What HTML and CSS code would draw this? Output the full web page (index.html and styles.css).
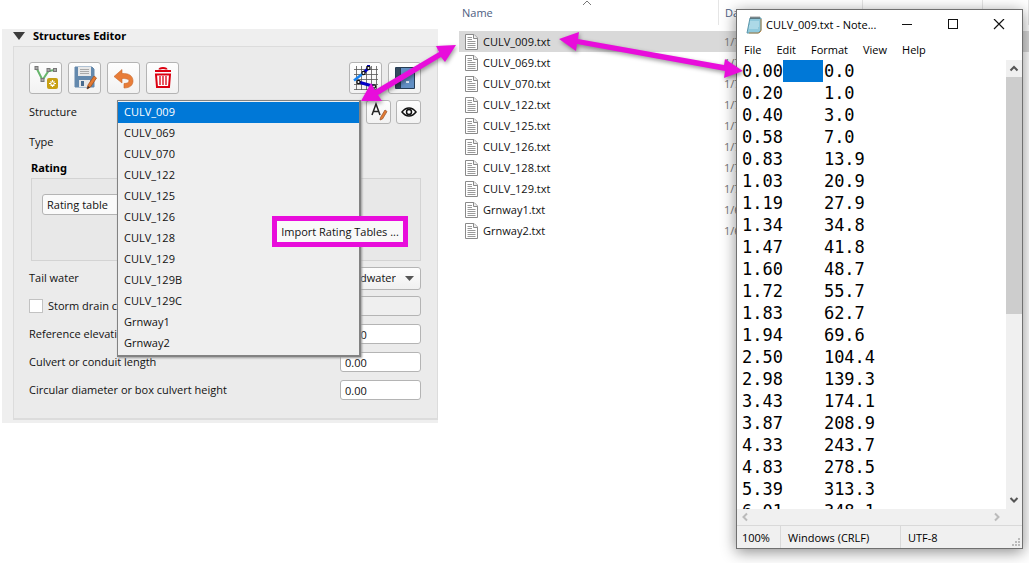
FILE: index.html
```html
<!DOCTYPE html>
<html lang="en">
<head>
<meta charset="utf-8">
<title>Import rating tables</title>
<link rel="stylesheet" href="styles.css">
</head>
<body>
<main class="stage">
  <section class="panel">
    <h2 class="panel-title"><svg width="12" height="8" viewBox="0 0 12 8"><path d="M0 0H12L6 8Z" fill="#3c3c3c"/></svg>Structures Editor</h2>
    <div class="group">
      <div class="toolbar">
        <button class="tool" aria-label="Add structure"><svg width="26" height="26" viewBox="0 0 26 26"><path d="M3.500 3L9.500 15L15.500 6L22 5" fill="none" stroke="#67b56c" stroke-width="2"/><g fill="#aaa" stroke="#777"><rect x="2" y="1.500" width="3" height="3"/><rect x="8" y="13.500" width="3" height="3"/><rect x="14" y="3.500" width="3" height="3"/><rect x="20.500" y="3.500" width="3" height="3"/></g><rect x="14" y="13" width="11" height="11" rx="2" fill="#c8a013"/><path d="M19.500 15V22M16 18.500H23M17.500 16.500L21.500 20.500M21.500 16.500L17.500 20.500" stroke="#fff" stroke-width="1.200"/><circle cx="19.500" cy="18.500" r="1.200" fill="#c8a013"/></svg></button>
        <button class="tool" aria-label="Save"><svg width="26" height="26" viewBox="0 0 26 26"><path d="M3 2H20L22 4V22H3Z" fill="#6489ad" stroke="#6489ad"/><rect x="6" y="2" width="13" height="9" fill="#e8e8e8"/><path d="M8 4.500H17M8 6.500H17M8 8.500H17" stroke="#aaa"/><rect x="7" y="15" width="11" height="7" fill="#e8e8e8"/><rect x="9" y="16" width="3" height="5" fill="#496b8e"/><path d="M22 11L24.500 13L18.500 22L15 24L16 20Z" fill="#e47b32" stroke="#a9521e" stroke-width=".8"/><path d="M15 24L16 21L18 22.500Z" fill="#333"/></svg></button>
        <button class="tool" aria-label="Undo"><svg width="26" height="26" viewBox="0 0 26 26"><path d="M3 11.500L11 4.500V8.500C18 8 22 11 22 16C22 20 19 23 13 23V18.500C16 18.500 18 17.500 18 16C18 14 15 13.500 11 13.500V18Z" fill="#e87d38" stroke="#c8662a" stroke-width=".6"/></svg></button>
        <button class="tool" aria-label="Delete"><svg width="26" height="26" viewBox="0 0 26 26"><path d="M9.500 4.500C9.500 2.500 16.500 2.500 16.500 4.500M5 6H21" fill="none" stroke="#dc0010" stroke-width="2"/><path d="M6 9.500H20L19 22H7Z" fill="#fff" stroke="#dc0010" stroke-width="2"/><path d="M10 11V20M13 11V20M16 11V20" stroke="#dc0010" stroke-width="1.300"/></svg></button>
        <span class="grow"></span>
        <button class="tool" aria-label="Schematize"><svg width="26" height="26" viewBox="0 0 26 26"><path d="M1 4.500H25M1 9.500H25M1 14.500H25M1 19.500H25M1 24.500H25M3.500 1V25M8.500 1V25M13.500 1V25M18.500 1V25M23.500 1V25" stroke="#555" stroke-width=".8"/><path d="M1 15.500L10.500 8" stroke="#1681f0" stroke-width="2.500"/><path d="M10.500 8L15.500 3V0M5.500 17L21 21.500" stroke="#0000c8" stroke-width="3" fill="none"/><g fill="#fff" stroke="#111" stroke-width="1.200"><circle cx="10.500" cy="8" r="1.600"/><circle cx="15.500" cy="3" r="1.600"/><circle cx="5.500" cy="17" r="1.600"/><circle cx="21" cy="21.500" r="1.600"/></g></svg></button>
        <button class="tool" aria-label="Help"><svg width="26" height="26" viewBox="0 0 26 26"><rect x="3" y="2" width="20" height="22" rx="1" fill="#263d55"/><rect x="4" y="3" width="4" height="20" fill="#34495e"/><rect x="9" y="3" width="13" height="20" fill="#628fc4"/><rect x="14" y="16" width="3" height="2" fill="#e5eefa"/></svg></button>
      </div>
      <div class="row row-structure">
        <label for="structure">Structure</label>
        <span class="grow"></span>
        <button class="mini" aria-label="Rename"><svg width="20" height="20" viewBox="0 0 20 20"><path d="M3 13L7 2L11 13M4.500 9.500H9.500" fill="none" stroke="#222" stroke-width="1.500"/><path d="M16 8L18 9.500L13.500 17L11 18L11.500 15.500Z" fill="#e47b32" stroke="#9c5b34" stroke-width=".8"/></svg></button>
        <button class="mini" aria-label="Show"><svg width="20" height="20" viewBox="0 0 20 20"><path d="M3 10C7 4.700 13 4.700 17 10C13 15.300 7 15.300 3 10Z" fill="#fff" stroke="#111" stroke-width="1.500"/><circle cx="10" cy="10" r="2.500" fill="#fff" stroke="#111" stroke-width="1.500"/></svg></button>
      </div>
      <div class="row row-type">Type</div>
      <h3 class="rating-title">Rating</h3>
      <div class="rating">
        <select class="rating-select" aria-label="Rating"><option>Rating table</option></select>
      </div>
      <div class="row"><label for="tail">Tail water</label><span class="grow"></span>
        <span class="combo"><select id="tail"><option>Headwater</option></select><svg width="9" height="5" viewBox="0 0 9 5"><path d="M0 0H9L4.500 5Z" fill="#555"/></svg></span></div>
      <div class="row"><label class="check"><input type="checkbox">Storm drain capacity</label><span class="grow"></span><input class="field off" aria-label="Storm drain capacity" disabled></div>
      <div class="row"><label for="ref">Reference elevation</label><span class="grow"></span><input class="field" id="ref" value="0.00"></div>
      <div class="row"><label for="len">Culvert or conduit length</label><span class="grow"></span><input class="field" id="len" value="0.00"></div>
      <div class="row"><label for="dia">Circular diameter or box culvert height</label><span class="grow"></span><input class="field" id="dia" value="0.00"></div>
    </div>
    <select class="popup" id="structure" size="12">
      <option selected>CULV_009</option><option>CULV_069</option><option>CULV_070</option><option>CULV_122</option><option>CULV_125</option><option>CULV_126</option><option>CULV_128</option><option>CULV_129</option><option>CULV_129B</option><option>CULV_129C</option><option>Grnway1</option><option>Grnway2</option>
    </select>
    <button class="import">Import Rating Tables ...</button>
  </section>

  <section class="files">
    <svg class="sort" width="10" height="6" viewBox="0 0 10 6"><path d="M1 5L5 1L9 5" fill="none" stroke="#777"/></svg>
    <svg class="defs" width="0" height="0"><symbol id="doc" viewBox="0 0 13 16"><path d="M.5.5H9L12.500 4V15.500H.5Z" fill="#fff" stroke="#8a8a8a"/><path d="M8.500.5V4.500H12.500" fill="#eee" stroke="#8a8a8a"/><path d="M2.500 3.500H7M2.500 5.500H7M2.500 7.500H10.500M2.500 9.500H10.500M2.500 11.500H10.500M2.500 13.500H10.500" stroke="#999"/></symbol></svg>
    <table class="list">
      <thead><tr><th class="c-name">Name</th><th class="c-date">Date modified</th><th class="c-type">Type</th><th>Size</th></tr></thead>
      <tbody>
        <tr class="picked"><td><svg class="doc"><use href="#doc"/></svg>CULV_009.txt</td><td>1/7</td><td></td><td></td></tr>
        <tr><td><svg class="doc"><use href="#doc"/></svg>CULV_069.txt</td><td>1/7</td><td></td><td></td></tr>
        <tr><td><svg class="doc"><use href="#doc"/></svg>CULV_070.txt</td><td>1/7</td><td></td><td></td></tr>
        <tr><td><svg class="doc"><use href="#doc"/></svg>CULV_122.txt</td><td>1/7</td><td></td><td></td></tr>
        <tr><td><svg class="doc"><use href="#doc"/></svg>CULV_125.txt</td><td>1/7</td><td></td><td></td></tr>
        <tr><td><svg class="doc"><use href="#doc"/></svg>CULV_126.txt</td><td>1/7</td><td></td><td></td></tr>
        <tr><td><svg class="doc"><use href="#doc"/></svg>CULV_128.txt</td><td>1/7</td><td></td><td></td></tr>
        <tr><td><svg class="doc"><use href="#doc"/></svg>CULV_129.txt</td><td>1/7</td><td></td><td></td></tr>
        <tr><td><svg class="doc"><use href="#doc"/></svg>Grnway1.txt</td><td>1/6</td><td></td><td></td></tr>
        <tr><td><svg class="doc"><use href="#doc"/></svg>Grnway2.txt</td><td>1/6</td><td></td><td></td></tr>
      </tbody>
    </table>
  </section>

  <section class="notepad">
    <header class="titlebar">
      <svg width="17" height="18" viewBox="0 0 17 18"><path d="M4 2H15V14L12 17H1Z" fill="#8fc9dc" stroke="#5d97aa"/><path d="M15 3V15L13 17H3" fill="none" stroke="#b98d52"/><path d="M4 6H13M4 8H13M3 10H13M3 12H12" stroke="#c9e9f2"/><path d="M5 .5V3M7 .5V3M9 .5V3M11 .5V3M13 .5V3" stroke="#444"/></svg>
      <h1>CULV_009.txt - Note...</h1>
      <button aria-label="Minimize"><svg width="12" height="12" viewBox="0 0 12 12"><path d="M1 5.500H11" stroke="#111"/></svg></button>
      <button aria-label="Maximize"><svg width="12" height="12" viewBox="0 0 12 12"><rect x="1.500" y=".5" width="9" height="9" fill="none" stroke="#111"/></svg></button>
      <button aria-label="Close"><svg width="12" height="12" viewBox="0 0 12 12"><path d="M1 0L11 10M11 0L1 10" stroke="#111" stroke-width="1.200"/></svg></button>
    </header>
    <nav class="menu"><button>File</button><button>Edit</button><button>Format</button><button>View</button><button>Help</button></nav>
    <div class="body">
      <textarea class="text" aria-label="Text editor" spellcheck="false">0.00	0.0
0.20	1.0
0.40	3.0
0.58	7.0
0.83	13.9
1.03	20.9
1.19	27.9
1.34	34.8
1.47	41.8
1.60	48.7
1.72	55.7
1.83	62.7
1.94	69.6
2.50	104.4
2.98	139.3
3.43	174.1
3.87	208.9
4.33	243.7
4.83	278.5
5.39	313.3
6.01	348.1</textarea>
      <div class="vbar"><svg width="16" height="17" viewBox="0 0 16 17"><path d="M4.500 10.500L8 7L11.500 10.500" fill="none" stroke="#555" stroke-width="2"/></svg><span class="thumb"></span><svg width="16" height="17" viewBox="0 0 16 17"><path d="M4.500 6L8 9.500L11.500 6" fill="none" stroke="#555" stroke-width="2"/></svg></div>
    </div>
    <div class="hbar"><svg width="16" height="16" viewBox="0 0 16 16"><path d="M10 4.500L6.500 8L10 11.500" fill="none" stroke="#bbb" stroke-width="2"/></svg><svg width="16" height="16" viewBox="0 0 16 16"><path d="M6 4.500L9.500 8L6 11.500" fill="none" stroke="#bbb" stroke-width="2"/></svg></div>
    <footer class="status"><span class="s-zoom">100%</span><span class="s-eol">Windows (CRLF)</span><span class="s-enc">UTF-8</span><svg width="9" height="9" viewBox="0 0 9 9"><path d="M6 0h2v2h-2zM3 3h2v2h-2zM6 3h2v2h-2zM0 6h2v2h-2zM3 6h2v2h-2zM6 6h2v2h-2z" fill="#bbb"/></svg></footer>
  </section>

  <svg class="arrows" width="1029" height="563" viewBox="0 0 1029 563">
    <g fill="#e80ddb">
      <path d="M361 101L371 83L375 90L439 52L436 46L456 45L445 62L441 57L378 95L382 101Z"/>
      <path d="M559 39L579 32L578 39L724 65L725 59L743 71L724 78L725 71L577 44L576 51Z"/>
    </g>
  </svg>
</main>
</body>
</html>
```

FILE: styles.css
```css
* { box-sizing: border-box; }
body { margin: 0; background: #fff; font: 11px/16px "Open Sans", "Noto Sans", sans-serif; color: #111; }
button, select, input, textarea { font: inherit; color: inherit; margin: 0; }
button { padding: 0; border: 0; background: none; }
h1, h2, h3 { margin: 0; font: inherit; }
svg { display: block; flex: none; }

.stage { position: relative; display: grid; grid-template-columns: 459fr 570fr; min-height: 100vh; overflow: hidden; }

/* structures panel */
.panel { position: relative; align-self: start; margin: 29px 21px 0 2px; padding-bottom: 3px; background: #efefef; }
.panel-title { display: flex; align-items: center; gap: 8px; height: 17px; padding: 0 11px 3px; font: bold 11px/14px "Noto Sans", sans-serif; color: #000; }
.group { margin-left: 11px; padding: 15px 16px 11px 15px; border: 1px solid #dcdcdc; border-bottom-width: 2px; background: #ebebeb; }
.toolbar { display: flex; gap: 6px; }
.grow { flex: 1; }
.tool, .mini { display: grid; place-items: center; border: 1px solid #b4b4b4; border-radius: 3px; background: linear-gradient(#fefefe, #f2f2f2); }
.tool { width: 33px; height: 32px; }
.mini { width: 25px; height: 24px; }
.row { display: flex; align-items: center; height: 22px; margin-bottom: 6px; }
.row-structure { gap: 5px; height: 24px; margin: 6px 0 10px; }
.row-type { height: 16px; margin-bottom: 8px; }
.rating-title { height: 20px; padding: 2px 2px 0; font: bold 11px/16px "Noto Sans", sans-serif; color: #000; }
.rating { height: 83px; margin: 0 0 6px 2px; padding: 15px 10px; border: 1px solid #d3d3d3; background: #e8e8e8; }
.rating-select { appearance: none; width: 140px; height: 21px; padding: 0 4px; border: 1px solid #b4b4b4; border-radius: 3px; background: #fafafa; line-height: 18px; }
.combo { position: relative; width: 112px; }
.combo select { appearance: none; width: 100%; height: 23px; padding: 0 24px 0 0; border: 1px solid #b4b4b4; border-radius: 3px; background: linear-gradient(#fdfdfd, #f0f0f0); text-align: right; text-align-last: right; }
.combo svg { position: absolute; right: 7px; top: 9px; }
.check { display: flex; align-items: center; gap: 5px; }
.check input { appearance: none; width: 14px; height: 14px; border: 1px solid #c2c2c2; background: #fff; }
.field { width: 81px; height: 20px; padding: 0 4px; border: 1px solid #b4b4b4; border-radius: 3px; background: #fff; }
.field.off { background: #efefef; }
.popup { position: absolute; left: 115px; top: 71px; width: 244px; height: 257px; padding: 1px 0 0; overflow: hidden; border: 1px solid #828282; border-right-width: 2px; border-bottom-width: 2px; border-radius: 0; background: #efefef; box-shadow: 1px 1px 2px #999; outline: 0; scrollbar-width: none; }
.popup option { height: 21px; min-height: 21px; padding: 2px 6px 0; line-height: 19px; }
.popup option:checked { background: linear-gradient(#0078d7, #0078d7); color: #fff; -webkit-text-fill-color: #fff; }
.import { position: absolute; left: 270px; top: 187px; width: 136px; height: 31px; border: 5px solid #e80ddb; background: #f9f9f9; white-space: nowrap; }

/* file list */
.files { position: relative; }
.sort { position: absolute; left: 123px; top: 0; }
.defs { position: absolute; }
.list { width: 100%; border-collapse: collapse; table-layout: fixed; line-height: 20px; white-space: nowrap; }
.list th { height: 31px; padding: 0 0 6px 6px; font-weight: normal; text-align: left; color: #4d6082; background: linear-gradient(#e5e5e5, #e5e5e5) right 0 top 0 / 1px 25px no-repeat; }
.list .c-name { width: 260px; padding-left: 3px; }
.list .c-date { width: 144px; }
.list .c-type { width: 120px; }
.list td { height: 21px; padding: 0 0 0 5px; overflow: hidden; color: #777; }
.list td:first-child { display: flex; align-items: center; gap: 5px; padding-left: 6px; color: #111; }
.doc { width: 13px; height: 16px; }
.picked { background: #d9d9d9; }

/* notepad window */
.notepad { position: absolute; right: 6px; top: 9px; display: flex; flex-direction: column; width: 287px; height: 540px; border: 1px solid #707070; background: #fff; box-shadow: 0 3px 14px rgba(0, 0, 0, .45); color: #000; }
.titlebar { display: flex; align-items: center; height: 30px; padding-left: 9px; }
.titlebar h1 { flex: 1; padding-left: 3px; white-space: nowrap; }
.titlebar button { display: grid; place-items: center; width: 46px; height: 30px; }
.menu { display: flex; gap: 15px; height: 20px; padding-left: 7px; line-height: 18px; }
.menu button { height: 19px; }
.body { display: flex; flex: 1; min-height: 0; }
.text { flex: 1; min-width: 0; padding: 0 0 0 5px; overflow: hidden; border: 0; resize: none; outline: 0; background: linear-gradient(#0078d7, #0078d7) 46px 0 / 40px 22px no-repeat; font: 17px/22px "DejaVu Sans Mono", monospace; tab-size: 8; white-space: pre; }
.vbar { display: flex; flex-direction: column; justify-content: space-between; width: 16px; background: #f0f0f0; }
.thumb { height: 237px; margin-bottom: auto; background: #cdcdcd; }
.hbar { display: flex; justify-content: space-between; height: 16px; padding-right: 17px; background: #f0f0f0; }
.status { display: flex; height: 23px; border-top: 1px solid #d9d9d9; background: #f0f0f0; line-height: 23px; }
.status span { padding-left: 7px; border-right: 1px solid #d9d9d9; }
.status .s-zoom { width: 44px; padding-left: 5px; }
.status .s-eol { width: 120px; }
.status .s-enc { flex: 1; border: 0; }
.status svg { align-self: flex-end; margin: 0 1px 1px; }

.arrows { position: absolute; left: 0; top: 0; pointer-events: none; filter: drop-shadow(1px 2px 2px rgba(0, 0, 0, .4)); }
```
